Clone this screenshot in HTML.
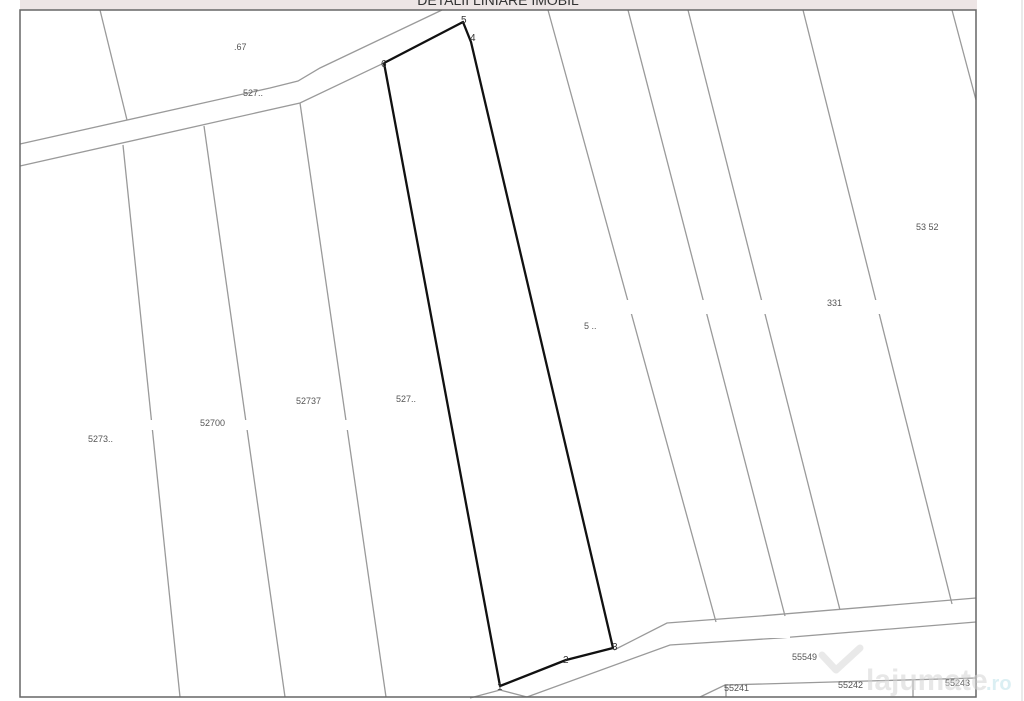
<!DOCTYPE html>
<html><head><style>
html,body{margin:0;padding:0;background:#fff;width:1024px;height:701px;overflow:hidden}
svg{display:block}
text{font-family:"Liberation Sans",sans-serif}
</style></head><body>
<svg width="1024" height="701" viewBox="0 0 1024 701" xmlns="http://www.w3.org/2000/svg">
<rect x="0" y="0" width="1024" height="701" fill="#fff"/>
<rect x="20" y="0" width="957" height="10" fill="#ede5e5"/>
<line x1="1022" y1="0" x2="1022" y2="701" stroke="#e4e4e4" stroke-width="1.5"/>
<text x="498" y="5" font-size="14" text-anchor="middle" fill="#333">DETALII LINIARE IMOBIL</text>
<g stroke="#9a9a9a" stroke-width="1.3" fill="none">
<polyline points="20,144 270,88 298,81 320,68 442,10"/>
<polyline points="20,166 300,103 384,63"/>
<line x1="100" y1="10" x2="127" y2="120"/>
<line x1="123" y1="145" x2="180" y2="697"/>
<line x1="204" y1="126" x2="285" y2="697"/>
<line x1="300" y1="103" x2="386" y2="697"/>
<line x1="548" y1="10" x2="716" y2="622"/>
<line x1="628" y1="10" x2="785" y2="616"/>
<line x1="688" y1="10" x2="840" y2="610"/>
<line x1="803" y1="10" x2="952" y2="604"/>
<line x1="952" y1="10" x2="976" y2="100"/>
<polyline points="614,650 667,623 760,616 976,598"/>
<polyline points="470,698 500,690 527,697"/>
<polyline points="527,697 670,645 780,638 976,622"/>
<polyline points="700,697 725,685 976,678"/>
<line x1="726" y1="685" x2="726" y2="697"/>
<line x1="913" y1="680" x2="913" y2="697"/>
</g>
<g fill="#fff">
<rect x="130" y="420" width="300" height="10"/>
<rect x="560" y="300" width="330" height="14"/>
<rect x="730" y="628" width="60" height="10"/>
</g>
<polyline points="384,63 463,22 471,42 613,648 566,660 500,686 384,63" stroke="#111" stroke-width="2.3" fill="none" stroke-linejoin="round"/>
<g font-size="10" fill="#333">
<text x="461" y="23">5</text><text x="470" y="41">4</text><text x="381" y="67">6</text>
<text x="612" y="650">3</text><text x="563" y="663">2</text><text x="497" y="690">1</text>
</g>
<g font-size="9" fill="#555">
<text x="234" y="50">.67</text>
<text x="243" y="96">527..</text>
<text x="88" y="442">5273..</text>
<text x="200" y="426">52700</text>
<text x="296" y="404">52737</text>
<text x="396" y="402">527..</text>
<text x="584" y="329">5  ..</text>
<text x="827" y="306">331</text>
<text x="916" y="230">53  52</text>
<text x="792" y="660">55549</text>
<text x="724" y="691">55241</text>
<text x="838" y="688">55242</text>
<text x="945" y="686">55243</text>
</g>
<rect x="20" y="10" width="956" height="687" fill="none" stroke="#666" stroke-width="1.5"/>
<g opacity="0.55">
<path d="M822,655 L836,670 L860,648" stroke="#d8d8d8" stroke-width="7" fill="none" stroke-linecap="round" stroke-linejoin="round"/>
<text x="866" y="690" font-size="30" font-weight="bold" fill="#d4d4d4">lajumate</text>
<text x="986" y="690" font-size="20" font-weight="bold" fill="#bfe3ea">.ro</text>
</g>
</svg>
</body></html>
